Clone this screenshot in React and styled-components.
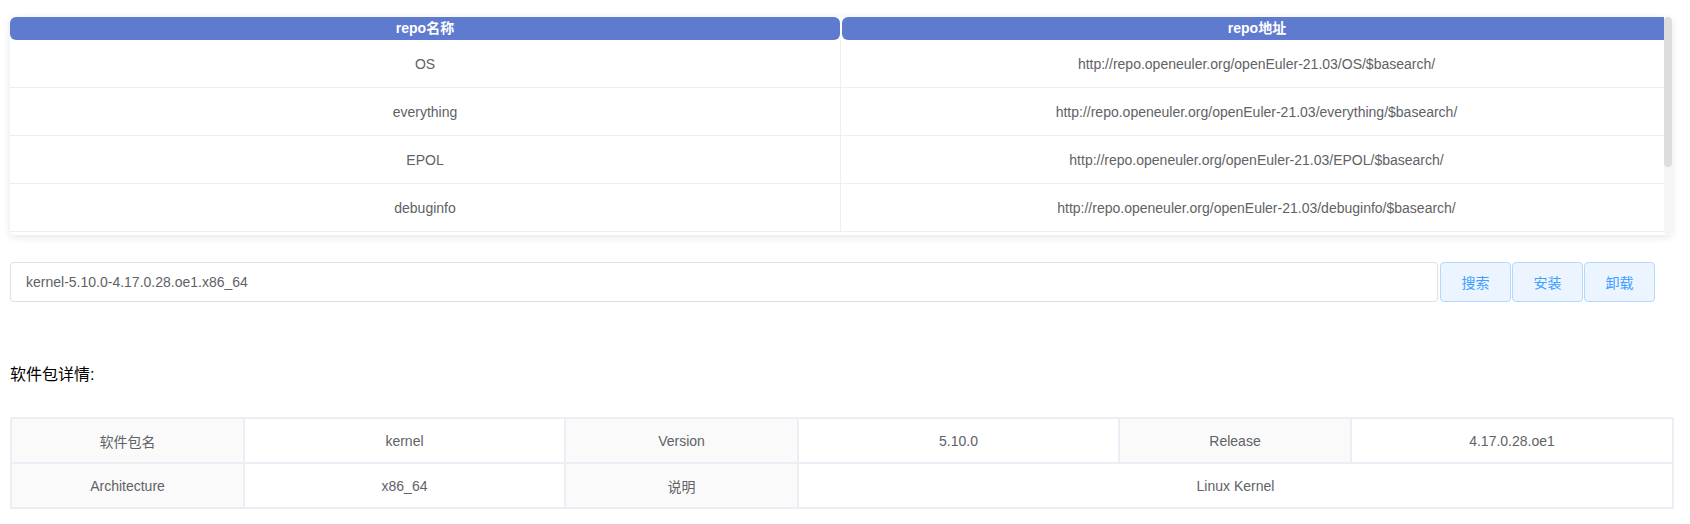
import React from "react";
import styled, { createGlobalStyle } from "styled-components";

const GlobalStyle = createGlobalStyle`
  html, body {
    margin: 0;
    padding: 0;
    background: #ffffff;
  }
  body {
    font-family: "Liberation Sans", Arial, "Noto Sans CJK SC", sans-serif;
    font-size: 14px;
    color: #606266;
  }
  * { box-sizing: border-box; }
`;

const Page = styled.div`
  width: 1690px;
  padding: 17px 18px 0 10px;
`;

const RepoCard = styled.div`
  display: flex;
  width: 1662px;
  height: 218px;
  border-radius: 4px;
  background: #ffffff;
  box-shadow: 0 2px 8px 0 rgba(0, 0, 0, 0.1);
  overflow: hidden;
`;

const TableViewport = styled.div`
  flex: 1;
  min-width: 0;
  overflow: hidden;
`;

const ScrollTrack = styled.div`
  flex: 0 0 8px;
  width: 8px;
  height: 100%;
  background: #f5f5f5;
  border-radius: 4px;
`;

const ScrollThumb = styled.div`
  width: 8px;
  height: 150px;
  background: #dddddd;
  border-radius: 4px;
`;

const RepoTable = styled.table`
  width: 1662px;
  table-layout: fixed;
  border-collapse: separate;
  border-spacing: 0;
`;

const HeadCell = styled.th`
  padding: 0;
  height: 23px;
`;

const HeadPill = styled.div`
  height: 23px;
  line-height: 23px;
  background: #5f7bcf;
  border-radius: 6px;
  color: #ffffff;
  font-weight: 700;
  font-size: 14px;
  text-align: center;
  margin: ${(p) => (p.$side === "left" ? "0 1px 0 0" : "0 0 0 1px")};
`;

const BodyCell = styled.td`
  padding: 0;
  border-bottom: 1px solid #ebeef5;
  border-right: ${(p) => (p.$divider ? "1px solid #ebeef5" : "none")};
`;

const CellText = styled.div`
  height: 47px;
  display: flex;
  align-items: center;
  justify-content: center;
  color: #606266;
  font-size: 14px;
`;

const SearchRow = styled.div`
  display: flex;
  align-items: stretch;
  height: 40px;
  margin-top: 27px;
  width: 1645px;
`;

const SearchInput = styled.input`
  flex: 1;
  min-width: 0;
  height: 40px;
  border: 1px solid #dcdfe6;
  border-radius: 4px;
  padding: 0 15px;
  font-family: "Liberation Sans", Arial, "Noto Sans CJK SC", sans-serif;
  font-size: 14px;
  color: #606266;
  outline: none;
  margin-right: 2px;
`;

const ActionButton = styled.button`
  width: 71px;
  height: 40px;
  margin-left: ${(p) => (p.$first ? "0" : "1px")};
  border: 1px solid #b3d8ff;
  border-radius: 4px;
  background: #ecf5ff;
  color: #409eff;
  font-family: "Liberation Sans", Arial, "Noto Sans CJK SC", sans-serif;
  font-size: 14px;
  padding: 0;
  cursor: pointer;
`;

const SectionTitle = styled.div`
  margin-top: 62px;
  height: 22px;
  line-height: 22px;
  font-size: 16px;
  color: #000000;
`;

const DetailTable = styled.table`
  margin-top: 31px;
  width: 1662px;
  table-layout: fixed;
  border-collapse: collapse;
`;

const DetailCell = styled.td`
  height: 45px;
  padding: 0;
  border: 2px solid #ebeef5;
  text-align: center;
  font-size: 14px;
  color: #606266;
  background: ${(p) => (p.$label ? "#fafafa" : "#ffffff")};
`;

const repos = [
  ["OS", "http://repo.openeuler.org/openEuler-21.03/OS/$basearch/"],
  ["everything", "http://repo.openeuler.org/openEuler-21.03/everything/$basearch/"],
  ["EPOL", "http://repo.openeuler.org/openEuler-21.03/EPOL/$basearch/"],
  ["debuginfo", "http://repo.openeuler.org/openEuler-21.03/debuginfo/$basearch/"],
];

export default function App() {
  return (
    <>
      <GlobalStyle />
      <Page>
        <RepoCard>
          <TableViewport>
            <RepoTable>
              <colgroup>
                <col style={{ width: "831px" }} />
                <col style={{ width: "831px" }} />
              </colgroup>
              <thead>
                <tr>
                  <HeadCell>
                    <HeadPill $side="left">repo名称</HeadPill>
                  </HeadCell>
                  <HeadCell>
                    <HeadPill $side="right">repo地址</HeadPill>
                  </HeadCell>
                </tr>
              </thead>
              <tbody>
                {repos.map(([name, url]) => (
                  <tr key={name}>
                    <BodyCell $divider>
                      <CellText>{name}</CellText>
                    </BodyCell>
                    <BodyCell>
                      <CellText>{url}</CellText>
                    </BodyCell>
                  </tr>
                ))}
              </tbody>
            </RepoTable>
          </TableViewport>
          <ScrollTrack>
            <ScrollThumb />
          </ScrollTrack>
        </RepoCard>

        <SearchRow>
          <SearchInput defaultValue="kernel-5.10.0-4.17.0.28.oe1.x86_64" />
          <ActionButton $first>搜索</ActionButton>
          <ActionButton>安装</ActionButton>
          <ActionButton>卸载</ActionButton>
        </SearchRow>

        <SectionTitle>软件包详情:</SectionTitle>

        <DetailTable>
          <colgroup>
            <col style={{ width: "233px" }} />
            <col style={{ width: "321px" }} />
            <col style={{ width: "233px" }} />
            <col style={{ width: "321px" }} />
            <col style={{ width: "232px" }} />
            <col style={{ width: "322px" }} />
          </colgroup>
          <tbody>
            <tr>
              <DetailCell $label>软件包名</DetailCell>
              <DetailCell>kernel</DetailCell>
              <DetailCell $label>Version</DetailCell>
              <DetailCell>5.10.0</DetailCell>
              <DetailCell $label>Release</DetailCell>
              <DetailCell>4.17.0.28.oe1</DetailCell>
            </tr>
            <tr>
              <DetailCell $label>Architecture</DetailCell>
              <DetailCell>x86_64</DetailCell>
              <DetailCell $label>说明</DetailCell>
              <DetailCell colSpan={3}>Linux Kernel</DetailCell>
            </tr>
          </tbody>
        </DetailTable>
      </Page>
    </>
  );
}
